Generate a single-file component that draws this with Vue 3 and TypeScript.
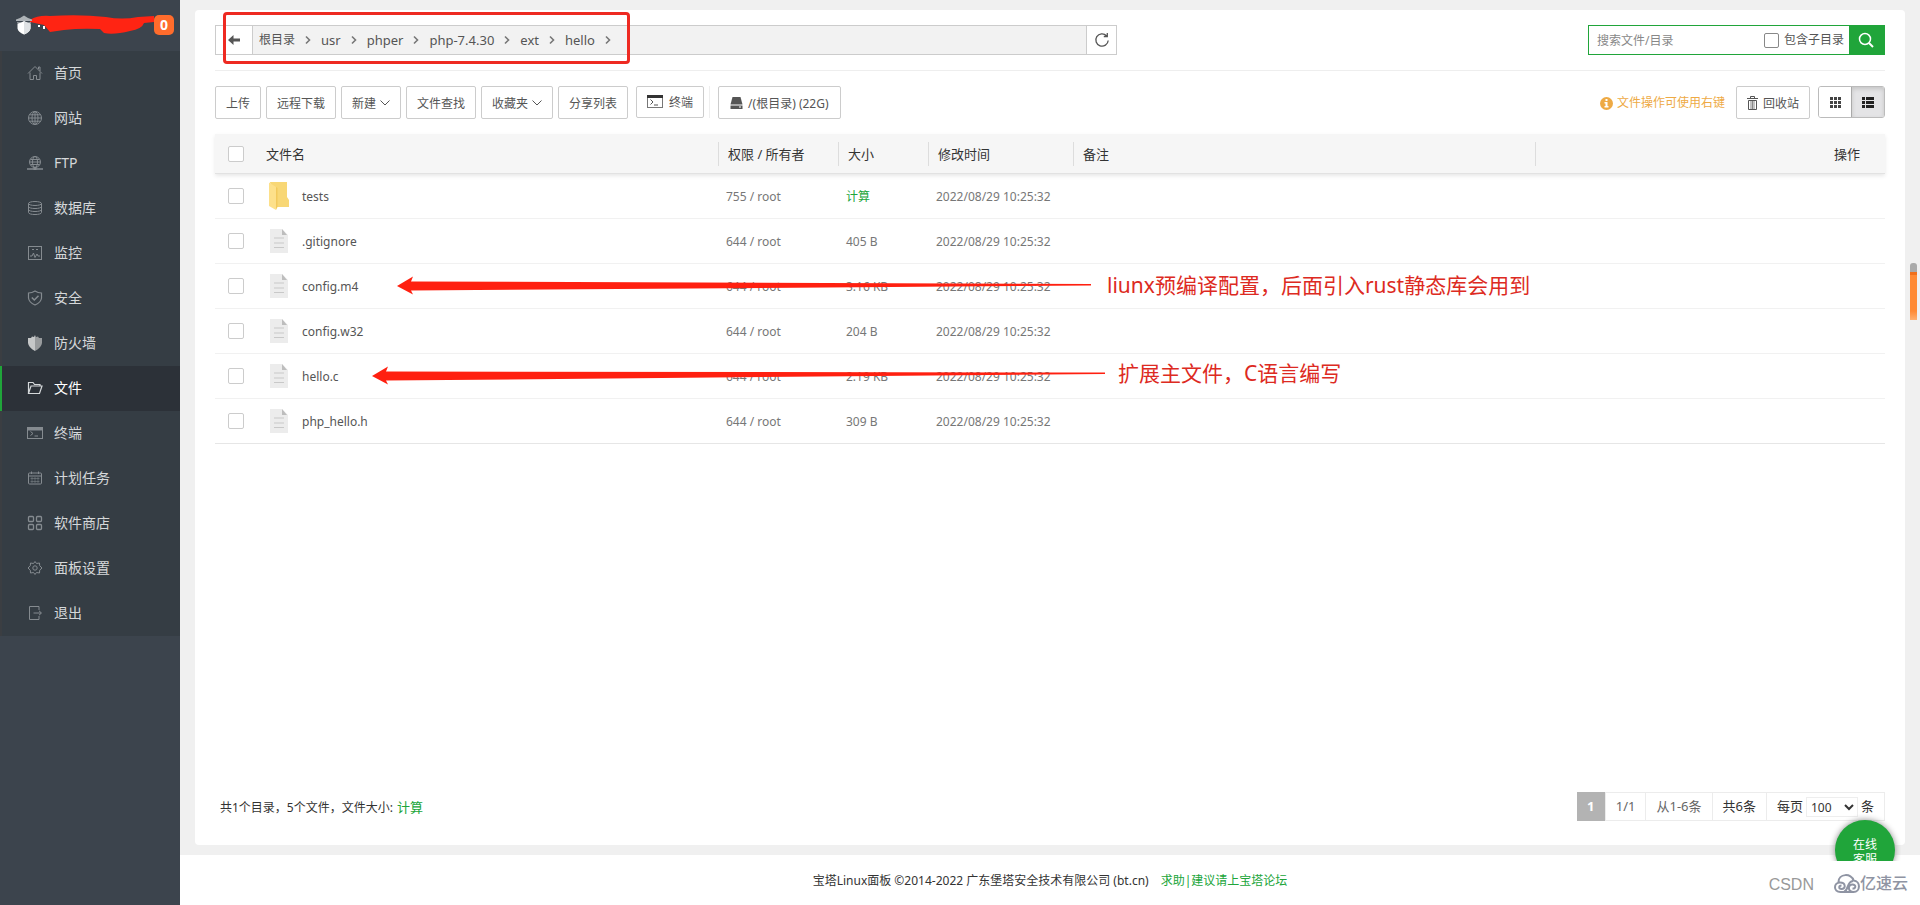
<script setup lang="ts">
import { ref } from 'vue'

interface MenuItem { label: string; icon: string }
interface FileRow { name: string; dir: boolean; perm: string; size: string; time: string; checked: boolean }

const menu: MenuItem[] = [
  { label: '首页', icon: 'home' },
  { label: '网站', icon: 'globe' },
  { label: 'FTP', icon: 'ftp' },
  { label: '数据库', icon: 'database' },
  { label: '监控', icon: 'monitor' },
  { label: '安全', icon: 'shield' },
  { label: '防火墙', icon: 'firewall' },
  { label: '文件', icon: 'folder' },
  { label: '终端', icon: 'terminal' },
  { label: '计划任务', icon: 'calendar' },
  { label: '软件商店', icon: 'apps' },
  { label: '面板设置', icon: 'gear' },
  { label: '退出', icon: 'exit' },
]
const active = ref('文件')

const crumbs: string[] = ['根目录', 'usr', 'phper', 'php-7.4.30', 'ext', 'hello']

const time = '2022/08/29 10:25:32'
const files = ref<FileRow[]>([
  { name: 'tests', dir: true, perm: '755 / root', size: '计算', time, checked: false },
  { name: '.gitignore', dir: false, perm: '644 / root', size: '405 B', time, checked: false },
  { name: 'config.m4', dir: false, perm: '644 / root', size: '3.16 KB', time, checked: false },
  { name: 'config.w32', dir: false, perm: '644 / root', size: '204 B', time, checked: false },
  { name: 'hello.c', dir: false, perm: '644 / root', size: '2.19 KB', time, checked: false },
  { name: 'php_hello.h', dir: false, perm: '644 / root', size: '309 B', time, checked: false },
])

const keyword = ref('')
const includeSub = ref(false)
const pageSize = ref('100')

function toggleAll(e: Event): void {
  const on = (e.target as HTMLInputElement).checked
  files.value.forEach((f) => { f.checked = on })
}
</script>

<template>
  <div class="shell">
    <aside class="sidebar">
      <header class="brand">
        <svg class="brand-logo" width="16" height="20" viewBox="0 0 16 20">
          <path d="M0 4.500Q4 3.500 8 0.500Q12 3.500 16 4.500V6H0Z" fill="#aeb3b7" />
          <path d="M1 7H15V8H1Z" fill="#8b9197" />
          <path d="M1.500 8.500Q5 8 8 6Q11 8 14.500 8.500V13.500Q14 17 8 19.500Q2 17 1.500 13.500Z" fill="#fff" />
          <path d="M8 6Q11 8 14.500 8.500V13.500Q14 17 8 19.500Z" fill="#dfe2e4" />
        </svg>
        <svg class="scribble" width="124" height="20" viewBox="0 0 124 20">
          <path d="M0 5Q8 0 20 1Q50 -1 76 2Q92 5 108 2L124 1V7L114 8Q112 14 100 16Q84 20 74 18L70 14Q50 13 34 15L20 17L14 10L0 7Z" fill="#ff2413" />
          <path d="M8 10H10V12H8ZM13 11H15V14H13Z" fill="#fff" />
        </svg>
        <span class="badge">0</span>
      </header>
      <nav class="menu">
        <a v-for="m in menu" :key="m.label" href="#" class="menu-item" :class="{ active: m.label === active }" @click.prevent="active = m.label">
          <svg class="menu-icon" width="16" height="16" viewBox="0 0 16 16" fill="none" stroke="currentColor">
            <template v-if="m.icon === 'home'">
              <path d="M1 8.500L8 1.500L15 8.500M3 7.500V14.500H6.500V10.500H9.500V14.500H13V7.500M11.500 4V2H13V6" />
            </template>
            <template v-else-if="m.icon === 'globe'">
              <circle cx="8" cy="8" r="6.500" />
              <ellipse cx="8" cy="8" rx="3" ry="6.500" />
              <path d="M1.500 8H14.500M8 1.500V14.500M2.500 4.800H13.500M2.500 11.200H13.500" />
            </template>
            <template v-else-if="m.icon === 'ftp'">
              <circle cx="8" cy="7" r="5.500" />
              <ellipse cx="8" cy="7" rx="2.500" ry="5.500" />
              <path d="M2.500 7H13.500M3.500 4.500H12.500M3.500 9.500H12.500" />
              <path d="M0 14H16" stroke-width="1.500" />
              <path d="M8 12V15" stroke-width="3" />
            </template>
            <template v-else-if="m.icon === 'database'">
              <ellipse cx="8" cy="3.500" rx="6.500" ry="2" />
              <path d="M1.500 3.500V12.500C1.500 15.200 14.500 15.200 14.500 12.500V3.500M1.500 6.500C1.500 9.200 14.500 9.200 14.500 6.500M1.500 9.500C1.500 12.200 14.500 12.200 14.500 9.500" />
            </template>
            <template v-else-if="m.icon === 'monitor'">
              <rect x="1.500" y="1.500" width="13" height="13" />
              <path d="M3 11H5L6.500 8L8 12.500L10 9L11 11H13M5 4.500H7M9 4.500H11" />
            </template>
            <template v-else-if="m.icon === 'shield'">
              <path d="M8 1Q11 3 14.500 3V8Q14 12.500 8 15Q2 12.500 1.500 8V3Q5 3 8 1Z" stroke-width="1.200" />
              <path d="M4.800 7.500L7.300 10L11.500 5.800" stroke-width="1.500" />
            </template>
            <template v-else-if="m.icon === 'firewall'">
              <path d="M8 0L9 2L11 1.500L12 3H15V8Q14.500 12.500 8 16Z" fill="#989b9d" stroke="none" />
              <path d="M8 0L7 2L5 1.500L4 3H1V8Q1.500 12.500 8 16Z" fill="#c5c7c8" stroke="none" />
            </template>
            <template v-else-if="m.icon === 'folder'">
              <path d="M1.500 13.500V2.500H6L7.500 4.500H13V6M1.500 13.500L4 6H15L12.500 13.500Z" stroke-width="1.200" />
            </template>
            <template v-else-if="m.icon === 'terminal'">
              <rect x="0.500" y="2.500" width="15" height="11" />
              <path d="M0 4H16" stroke-width="3" />
              <path d="M3.500 6.500L6 8.500L3.500 10.500M7.500 11H11" />
            </template>
            <template v-else-if="m.icon === 'calendar'">
              <rect x="1.500" y="3" width="13" height="11" rx="1" />
              <path d="M1.500 6H14.500M4.500 1.500V4M11.500 1.500V4" />
              <path d="M3.500 8.500H12.500M3.500 11.500H12.500M5 7V13M8 7V13M11 7V13" stroke-opacity="0.5" />
            </template>
            <template v-else-if="m.icon === 'apps'">
              <g stroke-width="1.300">
                <rect x="1.500" y="1.500" width="5" height="5" rx="1" />
                <rect x="9.500" y="1.500" width="5" height="5" rx="1" />
                <rect x="1.500" y="9.500" width="5" height="5" rx="1" />
                <rect x="9.500" y="9.500" width="5" height="5" rx="1" />
              </g>
            </template>
            <template v-else-if="m.icon === 'gear'">
              <path d="M8 1.500L9.500 3.500L12.500 3L12.700 5.700L15 8L12.700 10.200L12.500 13L9.500 12.500L8 14.500L6.500 12.500L3.500 13L3.300 10.200L1 8L3.300 5.700L3.500 3L6.500 3.500Z" />
              <circle cx="8" cy="8" r="2.200" />
            </template>
            <template v-else>
              <path d="M12 5V1.500H2.500V14.500H12V11M6.500 8H14M12 5.800L14.500 8L12 10.200" />
            </template>
          </svg>
          <span>{{ m.label }}</span>
        </a>
      </nav>
    </aside>

    <div class="page">
      <main class="card">
        <div class="path-row">
          <div class="path-bar">
            <button type="button" class="back" aria-label="返回">
              <svg width="12" height="10" viewBox="0 0 12 10"><path d="M5.500 0V3.500H12V6.500H5.500V10L0 5Z" fill="#555" /></svg>
            </button>
            <div class="crumbs">
              <template v-for="c in crumbs" :key="c">
                <a href="#" :class="{ cjk: c === '根目录' }" @click.prevent>{{ c }}</a>
                <svg class="chev" width="26" height="10" viewBox="0 0 26 10"><path d="M11 1.500L14.500 5L11 8.500" fill="none" stroke="#777" stroke-width="1.600" /></svg>
              </template>
            </div>
            <button type="button" class="reload" aria-label="刷新">
              <svg width="16" height="16" viewBox="0 0 16 16"><path d="M14.200 8.500A6.200 6.200 0 1 1 12.500 3.700M13.300 1V4.500H9.800" fill="none" stroke="#555" stroke-width="1.300" /></svg>
            </button>
          </div>
          <form class="search" @submit.prevent>
            <input v-model="keyword" class="search-text" type="text" placeholder="搜索文件/目录" aria-label="搜索文件/目录" />
            <label class="sub"><input v-model="includeSub" type="checkbox" class="box small" />包含子目录</label>
            <button type="submit" aria-label="搜索">
              <svg width="16" height="16" viewBox="0 0 16 16" fill="none" stroke="#fff" stroke-width="1.500"><circle cx="7" cy="7" r="5.500" /><path d="M11 11L15 15" stroke-width="2" /></svg>
            </button>
          </form>
        </div>

        <div class="toolbar">
          <button type="button" class="btn">上传</button>
          <button type="button" class="btn">远程下载</button>
          <button type="button" class="btn">新建<svg class="caret" width="10" height="6" viewBox="0 0 10 6"><path d="M0.500 0.500L5 5L9.500 0.500" fill="none" stroke="#555" /></svg></button>
          <button type="button" class="btn">文件查找</button>
          <button type="button" class="btn">收藏夹<svg class="caret" width="10" height="6" viewBox="0 0 10 6"><path d="M0.500 0.500L5 5L9.500 0.500" fill="none" stroke="#555" /></svg></button>
          <button type="button" class="btn">分享列表</button>
          <div class="term">
            <button type="button" class="btn low">
              <svg class="lead" width="16" height="14" viewBox="0 0 16 14"><rect x="0.500" y="0.500" width="15" height="12" fill="#fff" stroke="#777" /><path d="M0 0H16V3H0Z" fill="#333" /><path d="M3.500 4.500L6 7L3.500 9.500M7 10H11" fill="none" stroke="#555" /></svg>终端
            </button>
          </div>
          <button type="button" class="btn disk">
            <svg width="13" height="12" viewBox="0 0 13 12"><path d="M2.500 0H10.500L12.500 7.500H0.500Z" fill="#555" /><path d="M0.500 8.500H12.500V12H0.500Z" fill="#555" /><path d="M9 10H11" stroke="#fff" /></svg>/(根目录) (22G)
          </button>
          <div class="tools-right">
            <span class="hint">
              <svg width="13" height="13" viewBox="0 0 13 13"><circle cx="6.500" cy="6.500" r="6.500" fill="#eeaa44" /><path d="M5.500 2H7.500V4H5.500ZM4.500 5H7.500V9H8.500V10.500H4.500V9H5.500V6.500H4.500Z" fill="#fff" /></svg>文件操作可使用右键
            </span>
            <button type="button" class="btn trash">
              <svg width="11" height="14" viewBox="0 0 11 14" fill="none" stroke="#555"><path d="M0 2.500H11M3.500 2V0.500H7.500V2M1.500 4.500V13.500H9.500V4.500Z" /><path d="M4 5V13M5.500 5V13M7 5V13" stroke-width="0.700" /></svg>回收站
            </button>
            <div class="views">
              <button type="button" aria-label="图标视图">
                <svg width="11" height="11" viewBox="0 0 11 11" fill="#444"><path d="M0 0H3V3H0ZM4 0H7V3H4ZM8 0H11V3H8ZM0 4H3V7H0ZM4 4H7V7H4ZM8 4H11V7H8ZM0 8H3V11H0ZM4 8H7V11H4ZM8 8H11V11H8Z" /></svg>
              </button>
              <button type="button" class="on" aria-label="列表视图">
                <svg width="12" height="11" viewBox="0 0 12 11" fill="#222"><path d="M0 0H3V3H0ZM4 0H12V3H4ZM0 4H3V7H0ZM4 4H12V7H4ZM0 8H3V11H0ZM4 8H12V11H4Z" /></svg>
              </button>
            </div>
          </div>
        </div>

        <table class="files">
          <colgroup>
            <col class="c-check" /><col class="c-name" /><col class="c-perm" /><col class="c-size" /><col class="c-time" /><col /><col class="c-op" />
          </colgroup>
          <thead>
            <tr>
              <th class="check"><input type="checkbox" class="box" aria-label="全选" @change="toggleAll" /></th>
              <th class="first"><div>文件名</div></th>
              <th><div class="sep">权限 / 所有者</div></th>
              <th><div class="sep">大小</div></th>
              <th><div class="sep">修改时间</div></th>
              <th><div class="sep">备注</div></th>
              <th><div class="sep op">操作</div></th>
            </tr>
          </thead>
          <tbody>
            <tr v-for="f in files" :key="f.name">
              <td class="check"><input v-model="f.checked" type="checkbox" class="box" :aria-label="f.name" /></td>
              <td>
                <div class="name">
                  <svg v-if="f.dir" width="20" height="28" viewBox="0 0 20 28">
                    <path d="M1 0H18V15L20 18V25H6Z" fill="#f8d775" />
                    <path d="M0 0.500L7 5V28L0 24Z" fill="#fde08a" />
                    <path d="M7 5L8.500 6V25L7 28Z" fill="#f2c95c" />
                  </svg>
                  <svg v-else width="20" height="24" viewBox="0 0 20 24">
                    <path d="M1 0H13L19 6V24H1Z" fill="#ececec" />
                    <path d="M13 0L18 6H13Z" fill="#bdbdbd" />
                    <path d="M5 9H15M5 14H15M5 18.500H15" stroke="#c8c8c8" />
                  </svg>
                  <span>{{ f.name }}</span>
                </div>
              </td>
              <td class="dim">{{ f.perm }}</td>
              <td class="dim"><a v-if="f.dir" href="#" @click.prevent>{{ f.size }}</a><template v-else>{{ f.size }}</template></td>
              <td class="dim">{{ f.time }}</td>
              <td></td>
              <td></td>
            </tr>
          </tbody>
        </table>

        <div class="bottom">
          <div class="summary">共1个目录，5个文件，文件大小: <a href="#" @click.prevent>计算</a></div>
          <div class="pager">
            <span class="cur">1</span>
            <span class="soft">1/1</span>
            <span class="soft">从1-6条</span>
            <span>共6条</span>
            <label>每页
              <select v-model="pageSize"><option>100</option><option>200</option></select>
              条</label>
          </div>
        </div>
      </main>
      <footer class="footer">
        <span>宝塔Linux面板 ©2014-2022 广东堡塔安全技术有限公司 (bt.cn)</span>
        <a href="#" @click.prevent>求助|建议请上宝塔论坛</a>
      </footer>
    </div>

    <div class="scroll-mark"></div>
    <div class="service"><button type="button">在线<br />客服</button></div>
    <div class="marks">
      <span class="csdn">CSDN</span>
      <svg width="26" height="19" viewBox="0 0 26 19" fill="none" stroke="#8f94a3" stroke-width="2">
        <path d="M4.500 8.500C4 -1 18 -1 19.500 6.500C27 7 26.500 18 19.500 18H6.500C-1 18 -0.500 8.500 6 8.500C12 8.500 12 15 7.500 15C4.500 15 4.500 11.500 7.500 11.500" />
        <path d="M10 18C15 16 12.500 7.500 19 7M19.500 18C13 17.500 14 10.500 18.500 10.500C22.500 10.500 22 15 18.500 14.500" />
      </svg>
      <span class="yisu">亿速云</span>
    </div>

    <div class="notes">
      <div class="frame"></div>
      <svg class="arrow one" width="694" height="20" viewBox="0 0 694 20"><path d="M0 10L16 0.500L14 5.500L694 8V9.500L14 14.500L16 18.500Z" fill="#ff2010" /></svg>
      <svg class="arrow two" width="733" height="20" viewBox="0 0 733 20"><path d="M0 10L16 0.500L14 5.500L733 6.500V8L14 14.500L16 18.500Z" fill="#ff2010" /></svg>
      <p class="note one">liunx预编译配置，后面引入rust静态库会用到</p>
      <p class="note two">扩展主文件，C语言编写</p>
    </div>
  </div>
</template>

<style>
body { background: #f0f0f0; }
</style>

<style scoped>
* { box-sizing: border-box; }
.shell {
  position: relative; display: flex; min-height: 100vh; overflow: hidden;
  font-family: "Noto Sans", "Noto Sans CJK SC", sans-serif; font-size: 12px; line-height: 20px; color: #555;
}
a { color: inherit; text-decoration: none; }
svg { display: block; flex: none; }
button, input, select { font-family: inherit; font-size: 12px; color: inherit; margin: 0; }
button { cursor: pointer; }

.sidebar { width: 180px; flex: none; background: #3c444d; }
.brand { display: flex; align-items: center; height: 51px; padding: 0 6px 2px 16px; }
.scribble { margin-left: -2px; }
.brand-logo { position: relative; z-index: 1; }
.badge {
  width: 20px; height: 20px; border-radius: 5px; background: #ff6c2c; color: #fff;
  font-size: 14px; font-weight: 700; text-align: center; flex: none;
}
.menu { background: #353d44; }
.menu-item {
  display: flex; align-items: center; gap: 11px; height: 45px; padding: 0 0 2px 25px;
  border-left: 2px solid #3b3e42; font-size: 14px; color: #d5d8da;
}
.menu-icon { color: #858b90; }
.menu-item.active { background: #2c3138; border-left-color: #20a53a; color: #fff; }
.active .menu-icon { color: #d5d8da; }

.page { flex: 1; min-width: 0; display: flex; flex-direction: column; }
.card {
  flex: 1; margin: 10px 15px; padding: 15px 20px 24px; background: #fff; border-radius: 4px;
  display: flex; flex-direction: column;
}
.path-row {
  display: flex; justify-content: space-between; gap: 20px; padding-bottom: 15px; border-bottom: 1px solid #eee;
}
.path-bar { display: flex; flex: 0 1 902px; height: 30px; border: 1px solid #ccc; background: #f2f2f2; }
.back, .reload { display: flex; align-items: center; border: 0; background: #fff; }
.back { width: 37px; padding: 0 12px; border-right: 1px solid #ccc; }
.reload { width: 30px; justify-content: center; padding: 0; border-left: 1px solid #ccc; }
.crumbs { flex: 1; display: flex; align-items: center; padding-left: 6px; font-size: 13px; }
.crumbs .cjk { font-size: 12px; }
.search { display: flex; width: 297px; height: 30px; border: 1px solid #20a53a; }
.search-text { flex: 1; min-width: 0; border: 0; padding: 0 8px; outline: 0; }
.search-text::placeholder { color: #888; }
.sub { display: flex; align-items: center; gap: 5px; padding-right: 5px; }
.search button { width: 35px; border: 0; padding: 0 9px; background: #20a53a; }
.box {
  appearance: none; display: block; width: 16px; height: 16px; border: 1px solid #ccc; border-radius: 2px; background: #fff;
}
.box.small { width: 15px; height: 15px; border-color: #888; }
.box:checked { background: #20a53a; }

.toolbar { display: flex; align-items: flex-start; gap: 5px; padding: 15px 0 14px; }
.btn {
  display: flex; align-items: center; height: 33px; padding: 0 10px; border: 1px solid #ccc; border-radius: 2px;
  background: #fff; white-space: nowrap;
}
.btn.low { height: 32px; }
.caret { margin-left: 4px; }
.lead { margin-right: 6px; }
.term { margin-left: 3px; padding-right: 5px; border-right: 1px solid #eee; }
.disk { margin-left: 3px; padding: 0 11px; gap: 5px; }
.tools-right { margin-left: auto; display: flex; align-items: flex-start; }
.hint { display: flex; align-items: center; gap: 4px; height: 34px; margin-right: 11px; color: #eeaa44; }
.trash { gap: 5px; margin-right: 8px; }
.views { display: flex; height: 32px; border: 1px solid #bbb; border-radius: 3px; overflow: hidden; }
.views button { display: flex; align-items: center; justify-content: center; width: 32px; border: 0; padding: 0; background: #fff; }
.views .on { width: 33px; background: #e4e4e6; border-left: 1px solid #aaa; box-shadow: inset 0 2px 4px #c4c4c4; }

.files { width: 100%; table-layout: fixed; border-collapse: separate; border-spacing: 0; }
.c-check { width: 43px; }
.c-name { width: 460px; }
.c-perm { width: 120px; }
.c-size { width: 90px; }
.c-time { width: 145px; }
.c-op { width: 350px; }
thead { box-shadow: 0 2px 4px #e8e8e8; }
th { height: 40px; padding: 0; background: #f6f6f6; border-bottom: 1px solid #e2e2e2; font-size: 13px; font-weight: 400; text-align: left; color: #333; }
th div { line-height: 24px; padding-left: 8px; }
th .sep { border-left: 1px solid #ddd; padding-left: 9px; }
th .op { text-align: right; padding-right: 25px; }
td { height: 45px; padding: 0 8px; border-bottom: 1px solid #f1f1f1; }
tbody tr:last-child td { border-bottom-color: #e6e6e6; }
th.check, td.check { padding: 0 0 0 13px; }
.name { display: flex; align-items: center; gap: 13px; padding-left: 3px; }
.name span { padding-top: 2px; }
.dim { color: #777; padding: 2px 0 0 8px; }
.dim a, .summary a, .footer a { color: #20a53a; }

.bottom { margin-top: auto; display: flex; justify-content: space-between; align-items: center; padding: 0 0 0 5px; color: #333; }
.summary { padding-top: 2px; }
.summary a { font-size: 13px; margin-left: 1px; }
.pager { display: flex; height: 29px; font-size: 13px; line-height: 27px; border: 1px solid #ececec; }
.pager > * { padding: 0 10px; border-left: 1px solid #ececec; }
.pager .cur { width: 28px; margin: -1px 0 -1px -1px; padding: 0; line-height: 29px; border: 0; background: #b3b3b3; color: #fff; font-weight: 700; text-align: center; }
.pager .soft { color: #666; }
.pager label { display: flex; align-items: center; gap: 3px; }
.pager select { width: 52px; height: 20px; border: 1px solid #eee; background: #fff; padding: 0; }
.footer { height: 50px; padding-top: 2px; display: flex; align-items: center; justify-content: center; gap: 12px; background: #fff; color: #333; }

.scroll-mark {
  position: absolute; right: 3px; top: 263px; width: 7px; height: 57px; border-radius: 3px 3px 0 0;
  background: linear-gradient(#aaa 0 9px, #f0701c 9px 12px, #ff8a35 12px 48px, #ffb070);
}
.service { position: absolute; right: 19px; bottom: 44px; width: 72px; height: 47px; overflow: hidden; padding: 6px; }
.service button {
  display: block; width: 60px; height: 60px; border: 0; border-radius: 50%; background: #20a53a; color: #fff;
  line-height: 15px; padding: 4px 0 0; box-shadow: 0 0 6px #888;
}
.marks { position: absolute; right: 12px; bottom: 8px; display: flex; align-items: center; color: #8f94a3; font-size: 16px; line-height: 24px; }
.csdn { font-family: "Liberation Sans", sans-serif; color: #999; margin-right: 20px; padding-top: 4px; }
.yisu { font-weight: 500; }

.notes { position: absolute; left: 0; top: 0; pointer-events: none; }
.frame { position: absolute; left: 223px; top: 12px; width: 407px; height: 52px; border: 3px solid #ee2a22; border-radius: 4px; }
.arrow { position: absolute; }
.arrow.one { left: 397px; top: 276px; }
.arrow.two { left: 372px; top: 366px; }
.note { position: absolute; margin: 0; font-size: 21px; line-height: 30px; white-space: nowrap; color: #dd2a22; }
.note.one { left: 1107px; top: 270px; }
.note.two { left: 1118px; top: 358px; }
</style>
